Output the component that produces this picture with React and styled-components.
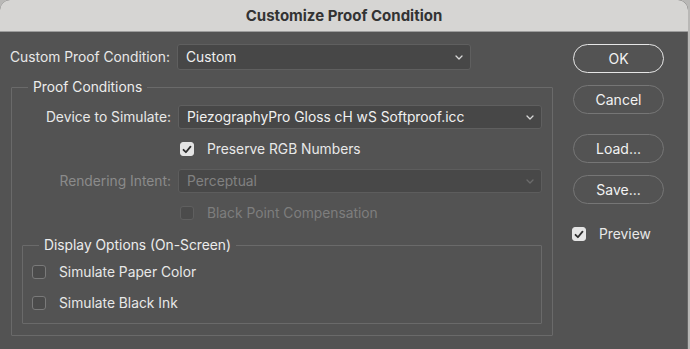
import React from "react";
import styled, { createGlobalStyle } from "styled-components";

const GlobalStyle = createGlobalStyle`
  html, body {
    margin: 0;
    padding: 0;
    background: #b9b8b6;
  }
  body {
    font-family: "Inter", "Liberation Sans", sans-serif;
  }
`;

const Window = styled.div`
  width: 688px;
  height: 349px;
  background: #535353;
  border-radius: 10px 10px 0 0;
  overflow: hidden;
  display: flex;
  flex-direction: column;
  box-shadow: inset -1px 0 0 #666;
`;

const TitleBar = styled.div`
  height: 31px;
  flex-shrink: 0;
  background: #d6d5d3;
  border-bottom: 1px solid #9c9c9c;
  display: flex;
  align-items: center;
  justify-content: center;
  font-size: 15px;
  font-weight: 700;
  color: #333;
`;

const Body = styled.div`
  flex: 1;
  display: flex;
  padding: 12px 0 0 0;
`;

const LeftColumn = styled.div`
  width: 542px;
  padding-left: 11px;
  display: flex;
  flex-direction: column;
`;

const RightColumn = styled.div`
  margin-left: 20px;
  width: 92px;
  display: flex;
  flex-direction: column;
`;

const TopRow = styled.div`
  display: flex;
  align-items: center;
  height: 26px;
`;

const Label = styled.span`
  font-size: 13.8px;
  color: ${(p) => (p.disabled ? "#8b8b8b" : "#e8e8e8")};
  white-space: nowrap;
`;

const TopLabel = styled(Label)`
  width: 167px;
  margin-left: -1px;
`;

const SelectBox = styled.div`
  position: relative;
  box-sizing: border-box;
  width: ${(p) => p.width}px;
  height: ${(p) => p.height}px;
  background: #474747;
  border: 1px solid #5f5f5f;
  border-radius: 3px;
  display: flex;
  align-items: center;
  padding: 0 24px 0 8px;
  font-size: 13.8px;
  color: ${(p) => (p.disabled ? "#8a8a8a" : "#f0f0f0")};
  opacity: ${(p) => (p.disabled ? 0.85 : 1)};
`;

const Chevron = styled.svg`
  position: absolute;
  right: 7px;
  top: 50%;
  margin-top: -2px;
`;

const Select = ({ value, width, height = 24, disabled }) => (
  <SelectBox width={width} height={height} disabled={disabled}>
    {value}
    <Chevron width="8" height="5" viewBox="0 0 8 5">
      <path
        d="M1 1 L4 4 L7 1"
        fill="none"
        stroke={disabled ? "#707070" : "#d8d8d8"}
        strokeWidth="1.3"
        strokeLinecap="round"
        strokeLinejoin="round"
      />
    </Chevron>
  </SelectBox>
);

const Group = styled.fieldset`
  margin: ${(p) => p.margin};
  padding: ${(p) => p.pad};
  border: 1px solid #6a6a6a;
  border-radius: 1px;
  display: flex;
  flex-direction: column;
  gap: ${(p) => p.gap}px;
`;

const Legend = styled.legend`
  font-size: 13.8px;
  color: #ececec;
  padding: 0 5px;
  margin-left: ${(p) => p.indent}px;
  line-height: 18px;
`;

const FormRow = styled.div`
  display: flex;
  align-items: center;
  height: ${(p) => p.h}px;
  padding-left: ${(p) => p.indent || 0}px;
`;

const RowLabel = styled(Label)`
  width: 159px;
  text-align: right;
  margin-right: 7px;
`;

const CheckLine = styled.label`
  display: flex;
  align-items: center;
  gap: 13px;
  font-size: 13.8px;
  color: ${(p) => (p.disabled ? "#7e7e7e" : "#e8e8e8")};
  white-space: nowrap;
`;

const Box = styled.span`
  box-sizing: border-box;
  width: 14px;
  height: 14px;
  border-radius: 3px;
  flex-shrink: 0;
  display: flex;
  align-items: center;
  justify-content: center;
  background: ${(p) => (p.checked ? "#e4e4e4" : "#4b4b4b")};
  border: 1px solid
    ${(p) => (p.checked ? "#e4e4e4" : p.disabled ? "#5f5f5f" : "#7a7a7a")};
`;

const Checkbox = ({ checked, disabled, children }) => (
  <CheckLine disabled={disabled}>
    <Box checked={checked} disabled={disabled}>
      {checked && (
        <svg width="10" height="9" viewBox="0 0 10 9">
          <path
            d="M1.5 4.8 L3.9 7.2 L8.5 1.6"
            fill="none"
            stroke="#2e2e2e"
            strokeWidth="1.8"
            strokeLinecap="round"
            strokeLinejoin="round"
          />
        </svg>
      )}
    </Box>
    {children}
  </CheckLine>
);

const Button = styled.button`
  box-sizing: border-box;
  width: 91px;
  height: 29px;
  margin-top: ${(p) => p.mt}px;
  border-radius: 15px;
  background: transparent;
  border: ${(p) => (p.primary ? "1.5px solid #e6e6e6" : "1px solid #767676")};
  color: #f2f2f2;
  font-family: inherit;
  font-size: 14px;
  padding: 0;
`;

const PreviewRow = styled.div`
  margin-top: 22px;
  margin-left: -1px;
`;

export default function App() {
  return (
    <>
      <GlobalStyle />
      <Window>
        <TitleBar>Customize Proof Condition</TitleBar>
        <Body>
          <LeftColumn>
            <TopRow>
              <TopLabel>Custom Proof Condition:</TopLabel>
              <Select value="Custom" width={294} height={26} />
            </TopRow>
            <Group margin="8px 0 0 0" pad="9px 10px 11px 0" gap={10}>
              <Legend indent={16}>Proof Conditions</Legend>
              <FormRow h={24}>
                <RowLabel>Device to Simulate:</RowLabel>
                <Select value="PiezographyPro Gloss cH wS Softproof.icc" width={364} />
              </FormRow>
              <FormRow h={20} indent={168}>
                <Checkbox checked>Preserve RGB Numbers</Checkbox>
              </FormRow>
              <FormRow h={24}>
                <RowLabel disabled>Rendering Intent:</RowLabel>
                <Select value="Perceptual" width={364} disabled />
              </FormRow>
              <FormRow h={20} indent={168}>
                <Checkbox disabled>Black Point Compensation</Checkbox>
              </FormRow>
              <Group margin="3px 0 0 10px" pad="8px 0 10px 9px" gap={11}>
                <Legend indent={7}>Display Options (On-Screen)</Legend>
                <FormRow h={20}>
                  <Checkbox>Simulate Paper Color</Checkbox>
                </FormRow>
                <FormRow h={20}>
                  <Checkbox>Simulate Black Ink</Checkbox>
                </FormRow>
              </Group>
            </Group>
          </LeftColumn>
          <RightColumn>
            <Button primary mt={0}>OK</Button>
            <Button mt={12}>Cancel</Button>
            <Button mt={20}>Load...</Button>
            <Button mt={12}>Save...</Button>
            <PreviewRow>
              <Checkbox checked>Preview</Checkbox>
            </PreviewRow>
          </RightColumn>
        </Body>
      </Window>
    </>
  );
}
